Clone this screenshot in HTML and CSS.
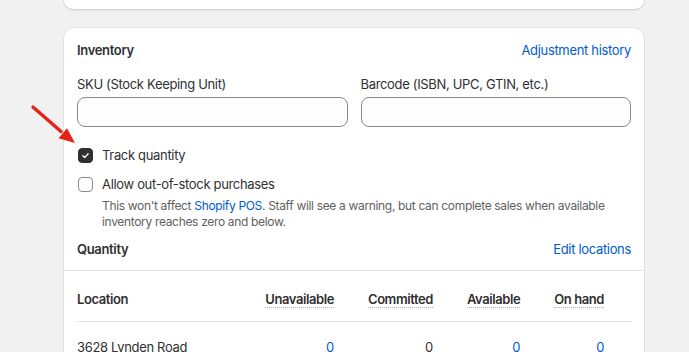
FILE: index.html
```html
<!DOCTYPE html>
<html lang="en">
<head>
<meta charset="utf-8">
<title>Inventory</title>
<link rel="stylesheet" href="styles.css">
</head>
<body>
<div class="page">
  <div class="card card-prev"></div>
  <div class="card card-inv">
    <div class="section">
      <div class="head-row">
        <h2 class="title">Inventory</h2>
        <a class="link" href="#">Adjustment history</a>
      </div>
      <div class="fields">
        <div class="field">
          <label class="label">SKU (Stock Keeping Unit)</label>
          <div class="input"></div>
        </div>
        <div class="field">
          <label class="label">Barcode (ISBN, UPC, GTIN, etc.)</label>
          <div class="input"></div>
        </div>
      </div>
      <div class="check-row check-track">
        <span class="box checked">
          <svg viewBox="0 0 16 16" width="15" height="15"><path d="M4.6 8.2 L7 10.4 L11.3 5.8" fill="none" stroke="#fff" stroke-width="1.6" stroke-linecap="round" stroke-linejoin="round"/></svg>
        </span>
        <span>Track quantity</span>
      </div>
      <div class="check-row check-allow">
        <span class="box"></span>
        <span>Allow out-of-stock purchases</span>
      </div>
      <p class="help">This won't affect <a class="link" href="#">Shopify POS</a>. Staff will see a warning, but can complete sales when available inventory reaches zero and below.</p>
      <div class="head-row qty-row">
        <h3 class="subtitle">Quantity</h3>
        <a class="link" href="#">Edit locations</a>
      </div>
    </div>
    <div class="table-wrap">
      <div class="table">
        <div class="th th-loc">Location</div>
        <div class="th"><span class="tip">Unavailable</span></div>
        <div class="th"><span class="tip">Committed</span></div>
        <div class="th"><span class="tip">Available</span></div>
        <div class="th"><span class="tip">On hand</span></div>
        <div class="td td-loc">3628 Lynden Road</div>
        <div class="td num blue">0</div>
        <div class="td num">0</div>
        <div class="td num blue">0</div>
        <div class="td num blue">0</div>
      </div>
    </div>
  </div>
  <svg class="arrow" width="90" height="60" viewBox="0 0 90 60">
    <line x1="6" y1="7" x2="34" y2="31.5" stroke="#e62117" stroke-width="3.4" stroke-linecap="round"/>
    <polygon points="48,43 31.5,38.3 40,28.3" fill="#e62117"/>
  </svg>
</div>
</body>
</html>
```

FILE: styles.css
```css
* { box-sizing: border-box; }
html, body { margin: 0; padding: 0; }
body {
  background: #f1f1f1;
  font-family: Inter, "Noto Sans", "Liberation Sans", sans-serif;
  font-size: 13px;
  line-height: 20px;
  letter-spacing: -0.33px;
  color: #303030;
  overflow: hidden;
  height: 352px;
}
.page {
  position: relative;
  padding-left: 63px;
  width: 645px;
}
.card {
  background: #fff;
  width: 582px;
}
.card-prev {
  height: 10px;
  border-radius: 0 0 12px 12px;
  box-shadow: inset 0 -1px 0 #d4d4d4, inset 1px 0 0 #e3e3e3, inset -1px 0 0 #e3e3e3, 0 1px 0 rgba(0,0,0,0.05);
}
.card-inv {
  margin-top: 17px;
  height: 400px;
  border-radius: 12px 12px 0 0;
  box-shadow: inset 0 1px 0 #e6e6e6, inset 1px 0 0 #e3e3e3, inset -1px 0 0 #dedede;
}
.section {
  padding: 13px 14px 11px;
}
.head-row {
  display: flex;
  justify-content: space-between;
  align-items: center;
}
.title, .subtitle {
  margin: 0;
  font-size: 13px;
  line-height: 20px;
  font-weight: 600;
  color: #303030;
}
.link {
  color: #005bd3;
  text-decoration: none;
}
.fields {
  margin-top: 14px;
  display: grid;
  grid-template-columns: 1fr 1fr;
  column-gap: 13px;
}
.label {
  display: block;
  line-height: 20px;
  margin-bottom: 3px;
  color: #303030;
}
.input {
  height: 30px;
  border: 1px solid #8a8a8a;
  border-radius: 8px;
  background: #fdfdfd;
}
.check-row {
  display: flex;
  align-items: center;
  gap: 9px;
  line-height: 20px;
}
.check-track { margin-top: 18px; }
.check-allow { margin-top: 9px; }
.box {
  width: 15px;
  height: 15px;
  margin-left: 1px;
  border-radius: 4px;
  border: 1px solid #8a8a8a;
  background: #fff;
  display: flex;
  align-items: center;
  justify-content: center;
  flex: none;
}
.box.checked {
  background: #303030;
  border-color: #303030;
}
.box svg { display: block; }
.help {
  margin: 4px 0 0;
  padding-left: 25px;
  font-size: 12px;
  line-height: 16px;
  letter-spacing: -0.33px;
  color: #616161;
}
.qty-row { margin-top: 9px; }
.table-wrap {
  border-top: 1px solid #e3e3e3;
  padding: 0 14px;
}
.table {
  display: grid;
  grid-template-columns: 1fr auto auto auto auto;
  column-gap: 34px;
  padding-right: 27px;
  position: relative;
}
.th {
  padding: 18px 34px 12px 0;
  margin-right: -34px;
  font-weight: 600;
  letter-spacing: -0.42px;
  justify-self: end;
  border-bottom: 1px solid #e3e3e3;
}
.table .th:nth-child(5) {
  margin-right: -27px;
  padding-right: 27px;
}
.th-loc {
  justify-self: stretch;
}
.tip {
  display: inline-block;
  line-height: 16px;
  padding-top: 2px;
  border-bottom: 1px dotted #b0b0b0;
}
.td {
  padding-top: 15px;
}
.num { justify-self: end; }
.blue { color: #005bd3; }
.arrow {
  position: absolute;
  left: 27px;
  top: 100px;
  overflow: visible;
}
```
